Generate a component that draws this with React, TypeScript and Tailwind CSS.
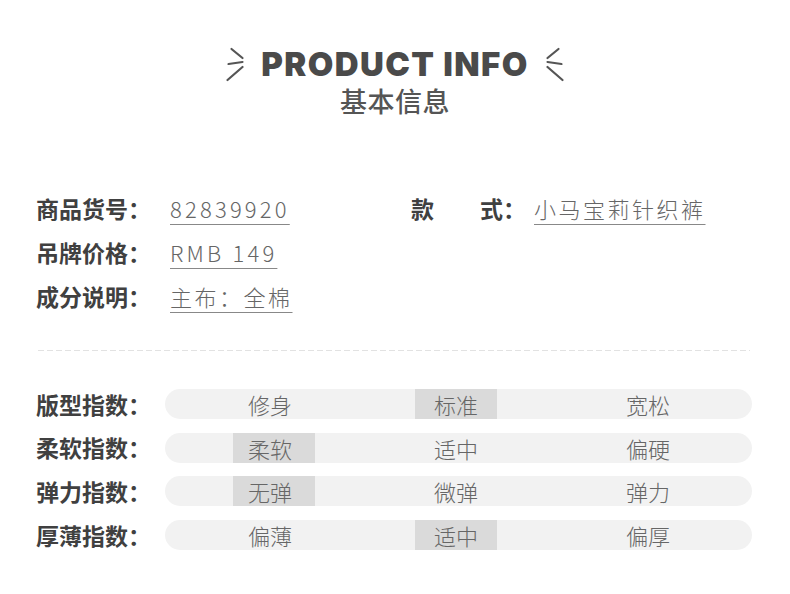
import React from "react";

const cjk = "font-['Noto_Sans_CJK_SC','Noto_Sans',sans-serif]";

const infoLeft = [
  { label: "商品货号：", value: "82839920", digits: true },
  { label: "吊牌价格：", value: "RMB 149", digits: true },
  { label: "成分说明：", value: "主布：全棉", digits: false },
];

const scales = [
  { label: "版型指数：", options: ["修身", "标准", "宽松"], active: 1 },
  { label: "柔软指数：", options: ["柔软", "适中", "偏硬"], active: 0 },
  { label: "弹力指数：", options: ["无弹", "微弹", "弹力"], active: 0 },
  { label: "厚薄指数：", options: ["偏薄", "适中", "偏厚"], active: 1 },
];

function Spark({ flip }: { flip?: boolean }) {
  return (
    <svg width="20" height="36" viewBox="0 0 20 36" className={flip ? "-scale-x-100" : ""}>
      <g stroke="#555" strokeWidth="2.2" strokeLinecap="round" fill="none">
        <line x1="5.5" y1="3" x2="16.5" y2="12" />
        <line x1="2.5" y1="18" x2="16.5" y2="16" />
        <line x1="1.5" y1="34" x2="16.5" y2="21" />
      </g>
    </svg>
  );
}

function Value({ children, digits }: { children: React.ReactNode; digits?: boolean }) {
  return (
    <span
      className={`text-[22px] leading-none font-light text-[#666] underline decoration-[#888] decoration-1 underline-offset-[6px] ${
        digits ? "tracking-[3.2px]" : "tracking-[2.5px]"
      }`}
    >
      {children}
    </span>
  );
}

export default function App() {
  return (
    <div className={`w-[790px] h-[594px] bg-white ${cjk} overflow-hidden`}>
      {/* heading */}
      <div className="flex flex-col items-center pt-[46px]">
        <div className="h-[36px] flex items-center gap-[15px]">
          <Spark />
          <h1 className="font-['Inter',sans-serif] font-black text-[33px] leading-none tracking-[1.4px] text-[#4a4a4a]">
            PRODUCT INFO
          </h1>
          <Spark flip />
        </div>
        <div className="mt-[5px] text-[27px] leading-none font-medium text-[#555] tracking-[0.5px]">
          基本信息
        </div>
      </div>

      {/* basic info */}
      <div className="mt-[72px] pl-[36px] grid grid-cols-[375px_1fr]">
        <div className="flex flex-col">
          {infoLeft.map((r) => (
            <div key={r.label} className="h-[44px] flex items-center">
              <span className="w-[134px] text-[23px] leading-none font-bold text-[#404040]">{r.label}</span>
              <Value digits={r.digits}>{r.value}</Value>
            </div>
          ))}
        </div>
        <div className="flex flex-col">
          <div className="h-[44px] flex items-center">
            <span className="w-[123px] text-[23px] leading-none font-bold text-[#404040] whitespace-pre">款　　式：</span>
            <Value>小马宝莉针织裤</Value>
          </div>
        </div>
      </div>

      {/* divider */}
      <div className="mt-[32px] mx-[38px] w-[712px] h-px bg-[linear-gradient(to_right,#e2e2e2_6px,transparent_6px)] bg-[length:9px_1px]" />

      {/* scales */}
      <div className="mt-[38px] pl-[36px] flex flex-col gap-[13.7px]">
        {scales.map((s) => (
          <div key={s.label} className="h-[30px] flex items-center">
            <span className="w-[129px] text-[23px] leading-none font-bold text-[#404040]">{s.label}</span>
            <div className="w-[587px] h-[30px] rounded-full bg-[#f2f2f2] flex pl-[68px]">
              {s.options.map((o, i) => (
                <div
                  key={o}
                  className={`w-[82px] h-full flex items-center justify-center text-[22px] font-light text-[#666] leading-none ${
                    i === 0 ? "pr-[8px]" : i === 1 ? "ml-[100px]" : "ml-[110px]"
                  } ${i === s.active ? "bg-[#dadada]" : ""}`}
                >
                  {o}
                </div>
              ))}
            </div>
          </div>
        ))}
      </div>
    </div>
  );
}
